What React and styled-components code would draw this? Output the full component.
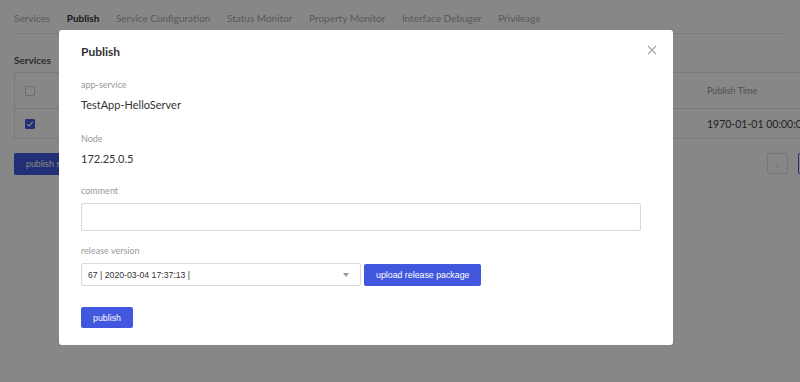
import React from "react";
import styled, { createGlobalStyle } from "styled-components";

const GlobalStyle = createGlobalStyle`
  html, body {
    margin: 0;
    padding: 0;
    background: #fff;
    overflow: hidden;
  }
  body {
    font-family: Lato, "Open Sans", sans-serif;
    color: #333;
  }
`;

const tabs = [
  "Services",
  "Publish",
  "Service Configuration",
  "Status Monitor",
  "Property Monitor",
  "Interface Debuger",
  "Privileage",
];

const App = () => {
  return (
    <>
      <GlobalStyle />
      <Page>
        <Tabs>
          {tabs.map((t) => (
            <Tab key={t} active={t === "Publish"}>
              {t}
            </Tab>
          ))}
        </Tabs>
        <SectionTitle>Services</SectionTitle>
        <Table>
          <Row header>
            <Cell>
              <CheckBox />
            </Cell>
            <Cell>Application</Cell>
            <Cell>Node</Cell>
            <Cell>Patch Version</Cell>
            <Cell>Publish Time</Cell>
          </Row>
          <Row>
            <Cell>
              <CheckBox checked>
                <svg width="8" height="8" viewBox="0 0 8 8">
                  <path d="M1.2 4.2 L3.2 6 L6.8 1.8" stroke="#fff" strokeWidth="1.2" fill="none" />
                </svg>
              </CheckBox>
            </Cell>
            <Cell>TestApp-HelloServer</Cell>
            <Cell>172.25.0.5</Cell>
            <Cell>67</Cell>
            <Cell>1970-01-01 00:00:00</Cell>
          </Row>
        </Table>
        <Toolbar>
          <PrimaryButton>publish selected</PrimaryButton>
          <Pager>
            <PageBox>‹</PageBox>
            <PageBox active>1</PageBox>
          </Pager>
        </Toolbar>
      </Page>

      <Overlay>
        <Modal>
          <ModalHeader>
            <ModalTitle>Publish</ModalTitle>
            <CloseButton aria-label="close">
              <svg width="10" height="10" viewBox="0 0 10 10">
                <path d="M1 1 L9 9 M9 1 L1 9" stroke="#a8a8a8" strokeWidth="1.1" />
              </svg>
            </CloseButton>
          </ModalHeader>
          <ModalBody>
            <FieldLabel>app-service</FieldLabel>
            <FieldValue space={19}>TestApp-HelloServer</FieldValue>
            <FieldLabel>Node</FieldLabel>
            <FieldValue space={17}>172.25.0.5</FieldValue>
            <FieldLabel>comment</FieldLabel>
            <CommentInput />
            <FieldLabel>release version</FieldLabel>
            <VersionRow>
              <SelectBox>
                <span>67 | 2020-03-04 17:37:13 |</span>
                <Caret />
              </SelectBox>
              <PrimaryButton>upload release package</PrimaryButton>
            </VersionRow>
            <PublishButton>publish</PublishButton>
          </ModalBody>
        </Modal>
      </Overlay>
    </>
  );
};

const Page = styled.div`
  padding: 0 14px;
  width: 800px;
  box-sizing: border-box;
`;

const Tabs = styled.div`
  display: flex;
  gap: 16.6px;
  padding: 11px 0 8px;
  border-bottom: 1px solid #e6e6e6;
`;

const Tab = styled.div`
  font-size: 10px;
  line-height: 14px;
  font-weight: ${(p) => (p.active ? 700 : 400)};
  color: ${(p) => (p.active ? "#333" : "#aaa")};
  white-space: nowrap;
`;

const SectionTitle = styled.div`
  margin-top: 19px;
  font-size: 10px;
  line-height: 14px;
  font-weight: 700;
  color: #555;
`;

const Table = styled.div`
  margin-top: 5px;
  width: 800px;
  border: 1px solid #e6e6e6;
  border-radius: 2px;
`;

const Row = styled.div`
  display: grid;
  grid-template-columns: 36px 270px 284px 92px 1fr;
  align-items: center;
  height: ${(p) => (p.header ? "35px" : "29px")};
  border-bottom: ${(p) => (p.header ? "1px solid #e6e6e6" : "none")};
  font-size: ${(p) => (p.header ? "9px" : "10.5px")};
  color: ${(p) => (p.header ? "#999" : "#444")};
`;

const Cell = styled.div`
  padding-left: 10px;
  white-space: nowrap;
`;

const CheckBox = styled.span`
  display: flex;
  align-items: center;
  justify-content: center;
  width: 10px;
  height: 10px;
  box-sizing: border-box;
  border: 1px solid ${(p) => (p.checked ? "#4157de" : "#d0d0d0")};
  background: ${(p) => (p.checked ? "#4157de" : "#fff")};
  border-radius: 1px;
`;

const Toolbar = styled.div`
  margin-top: 14px;
  display: flex;
  justify-content: space-between;
  align-items: flex-start;
`;

const Pager = styled.div`
  display: flex;
  gap: 10px;
  margin-right: -33px;
`;

const PageBox = styled.div`
  width: 21px;
  height: 21px;
  box-sizing: border-box;
  border: 1px solid ${(p) => (p.active ? "#4157de" : "#e0e0e0")};
  color: #bbb;
  font-size: 10px;
  display: flex;
  align-items: center;
  justify-content: center;
  border-radius: 2px;
`;

const Overlay = styled.div`
  position: fixed;
  inset: 0;
  background: rgba(0, 0, 0, 0.47);
  padding: 30px 0 0 59px;
`;

const Modal = styled.div`
  width: 614px;
  background: #fff;
  border-radius: 3px;
  box-sizing: border-box;
`;

const ModalHeader = styled.div`
  display: flex;
  justify-content: space-between;
  align-items: center;
  padding: 14px 16px 0 22px;
`;

const ModalTitle = styled.div`
  font-size: 12px;
  line-height: 16px;
  font-weight: 700;
  color: #333;
`;

const CloseButton = styled.div`
  display: flex;
  margin-top: -4px;
`;

const ModalBody = styled.div`
  padding: 18px 22px 17px;
  display: flex;
  flex-direction: column;
  align-items: flex-start;
`;

const FieldLabel = styled.div`
  font-size: 9px;
  line-height: 14px;
  color: #999;
  margin-bottom: 5px;
`;

const FieldValue = styled.div`
  font-size: 11px;
  line-height: 16px;
  color: #333;
  margin-bottom: ${(p) => p.space}px;
`;

const CommentInput = styled.div`
  width: 560px;
  height: 28px;
  box-sizing: border-box;
  border: 1px solid #d9d9d9;
  border-radius: 2px;
  margin-bottom: 13px;
`;

const VersionRow = styled.div`
  display: flex;
  align-items: center;
  gap: 3px;
  margin-bottom: 21px;
`;

const SelectBox = styled.div`
  width: 280px;
  height: 23px;
  box-sizing: border-box;
  border: 1px solid #d9d9d9;
  border-radius: 2px;
  display: flex;
  align-items: center;
  justify-content: space-between;
  padding: 0 11px 0 6px;
  font-family: "Liberation Sans", Arial, sans-serif;
  font-size: 8.7px;
  color: #333;
`;

const Caret = styled.span`
  width: 0;
  height: 0;
  border-left: 3px solid transparent;
  border-right: 3px solid transparent;
  border-top: 4px solid #999;
`;

const PrimaryButton = styled.button`
  height: 22px;
  padding: 0 12px;
  border: none;
  border-radius: 2px;
  background: #4157de;
  color: #fff;
  font-family: "Liberation Sans", Arial, sans-serif;
  font-size: 8.8px;
  white-space: nowrap;
  cursor: pointer;
`;

const PublishButton = styled(PrimaryButton)`
  width: 52px;
  height: 21px;
  padding: 0;
`;

export default App;
